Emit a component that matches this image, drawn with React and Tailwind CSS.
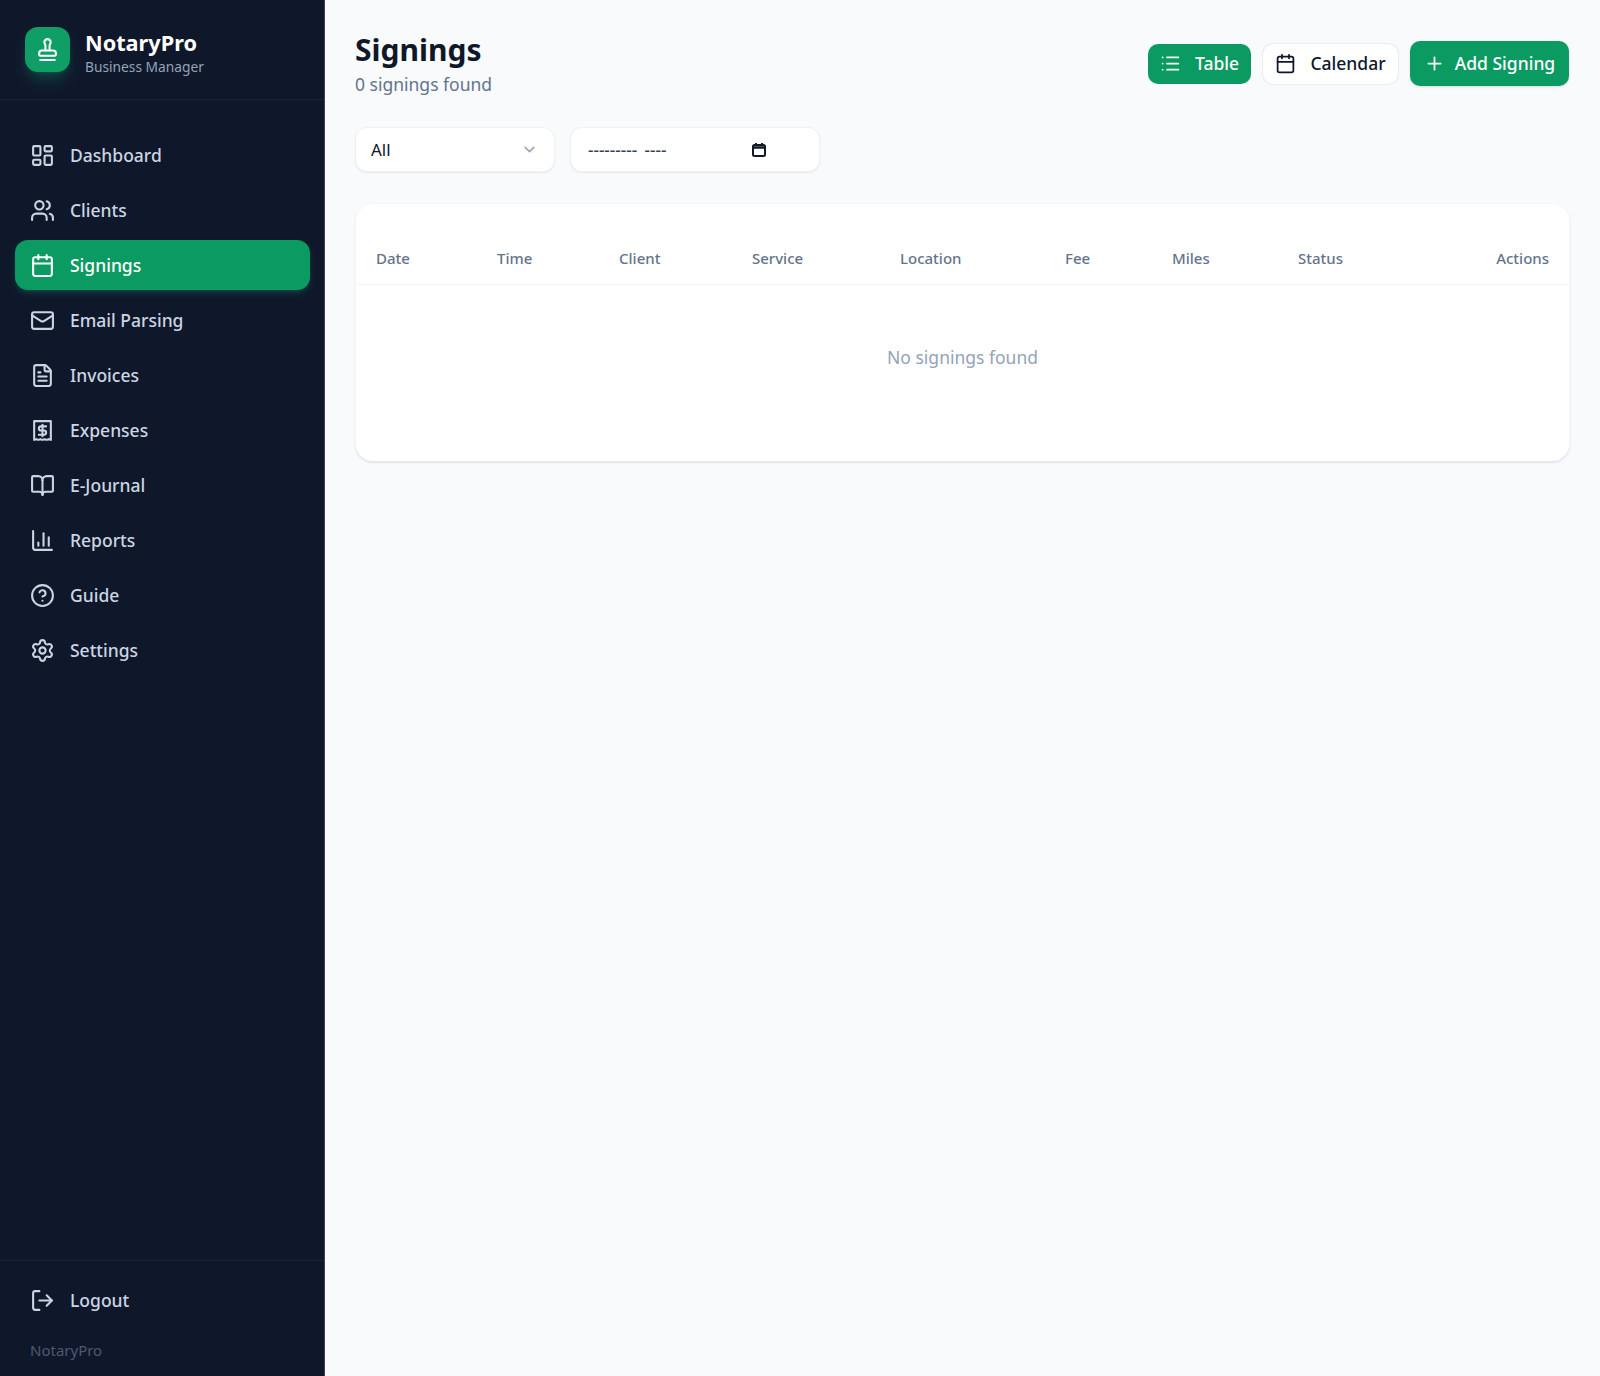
import { BookOpen, Calendar, ChartColumn, ChevronDown, CircleHelp, FileText, LayoutDashboard, List, LogOut, Mail, Plus, Settings, Stamp, Users } from 'lucide-react'

function ExpenseIcon({ className }) {
  return (
    <svg className={className} viewBox="0 0 24 24" fill="none" stroke="currentColor" strokeWidth="2" strokeLinecap="round" strokeLinejoin="round">
      <path d="M4 3h16v18l-2-.7-2 .7-2-.7-2 .7-2-.7-2 .7-2-.7-2 .7z" />
      <path d="M15.5 8h-5a2 2 0 0 0 0 4h3a2 2 0 0 1 0 4H8.5" />
      <path d="M12 6.5v11" />
    </svg>
  )
}

const navItems = [
  { label: 'Dashboard', icon: LayoutDashboard },
  { label: 'Clients', icon: Users },
  { label: 'Signings', icon: Calendar, active: true },
  { label: 'Email Parsing', icon: Mail },
  { label: 'Invoices', icon: FileText },
  { label: 'Expenses', icon: ExpenseIcon },
  { label: 'E-Journal', icon: BookOpen },
  { label: 'Reports', icon: ChartColumn },
  { label: 'Guide', icon: CircleHelp },
  { label: 'Settings', icon: Settings },
]

function NavItem({ item }) {
  const Icon = item.icon
  return (
    <div className={item.active
      ? 'flex h-[50px] items-center gap-[15px] rounded-[13px] bg-[#0b9a62] px-[15px] text-[17.5px] font-medium text-white shadow-md shadow-emerald-500/20'
      : 'flex h-[50px] items-center gap-[15px] rounded-[13px] px-[15px] text-[17.5px] font-medium text-[#cbd5e1]'}>
      <Icon className="h-[25px] w-[25px] shrink-0" strokeWidth={2} />
      <span>{item.label}</span>
    </div>
  )
}

function Sidebar() {
  return (
    <aside className="flex min-h-screen w-[325px] shrink-0 flex-col border-r border-[#3a4150] bg-[#0f172a]">
      <div className="flex h-[100px] items-center gap-[15px] border-b border-[#1b2436] px-[25px]">
        <div className="flex h-[45px] w-[45px] items-center justify-center rounded-[13px] bg-[#0f9f66] text-white shadow-lg shadow-emerald-500/25">
          <Stamp className="h-[25px] w-[25px]" strokeWidth={2} />
        </div>
        <div className="pt-[5px]">
          <div className="text-[21.7px] leading-[29px] font-bold text-white">NotaryPro</div>
          <div className="mt-[1px] text-[13.75px] leading-[18px] text-[#94a3b8]">Business Manager</div>
        </div>
      </div>
      <nav className="flex flex-1 flex-col gap-[5px] pt-[30px] pr-[14px] pb-[30px] pl-[15px]">
        {navItems.map((item) => <NavItem key={item.label} item={item} />)}
      </nav>
      <div className="border-t border-[#1b2436] px-[15px] pt-[14px] pb-[16px]">
        <NavItem item={{ label: 'Logout', icon: LogOut }} />
        <div className="mt-[15px] px-[15px] text-[15px] leading-[20px] text-[#4b5a70]">NotaryPro</div>
      </div>
    </aside>
  )
}

const columns = [
  { label: 'Date', width: 'w-[141px]', first: true },
  { label: 'Time', width: 'w-[122px]' },
  { label: 'Client', width: 'w-[133px]' },
  { label: 'Service', width: 'w-[148px]' },
  { label: 'Location', width: 'w-[165px]' },
  { label: 'Fee', width: 'w-[107px]' },
  { label: 'Miles', width: 'w-[126px]' },
  { label: 'Status', width: 'w-[130px]' },
  { label: 'Actions', width: '', right: true },
]

function SigningsTable() {
  return (
    <div className="overflow-hidden rounded-[18px] border-x border-t border-[#f4f6f9] bg-white pt-[28px] pb-[31px] shadow-[0_2px_2px_rgba(15,23,42,0.09)]">
      <table className="w-full table-fixed border-collapse">
        <thead>
          <tr className="border-b border-[#f5f7fa]">
            {columns.map((col) => (
              <th key={col.label} className={`${col.width} h-[52px] pr-[20px] text-[15px] font-medium text-[#64748b] ${col.right ? 'text-right' : 'text-left'} ${col.first ? 'pl-[20px]' : ''}`}>
                {col.label}
              </th>
            ))}
          </tr>
        </thead>
        <tbody>
          <tr>
            <td colSpan={9} className="h-[146px] text-center text-[17.5px] text-[#94a3b8]">No signings found</td>
          </tr>
        </tbody>
      </table>
    </div>
  )
}

export default function App() {
  return (
    <div className="flex min-h-screen bg-[#f8fafc] font-['Noto_Sans',sans-serif]">
      <Sidebar />
      <main className="flex-1 pt-[30px] pr-[30px] pl-[30px]">
        <div className="flex items-start justify-between">
          <div>
            <h1 className="text-[30px] leading-[40px] font-bold text-[#0f172a]">Signings</h1>
            <p className="mt-[2px] text-[17.5px] leading-[24px] text-[#64748b]">0 signings found</p>
          </div>
          <div className="mt-[11px] mr-[1px] flex items-center gap-[12px]">
            <button className="flex h-[40px] w-[103px] items-center justify-center gap-[14px] rounded-[10px] bg-[#0b9a62] text-[17.5px] font-medium text-white">
              <List className="h-[21px] w-[21px]" strokeWidth={2} />
              Table
            </button>
            <button className="flex h-[40px] w-[135px] items-center justify-center gap-[14px] rounded-[10px] bg-white text-[17.5px] font-medium text-[#0f172a] shadow-[0_0_2px_rgba(15,23,42,0.2)]">
              <Calendar className="h-[21px] w-[21px]" strokeWidth={2} />
              Calendar
            </button>
            <button className="flex h-[45px] w-[159px] items-center justify-center gap-[10px] rounded-[10px] bg-[#0b9a62] text-[17.5px] font-medium text-white shadow-sm">
              <Plus className="h-[21px] w-[21px]" strokeWidth={2} />
              Add Signing
            </button>
          </div>
        </div>
        <div className="mt-[31px] flex gap-[15px]">
          <div className="flex h-[45px] w-[200px] items-center justify-between rounded-[12px] border border-[#eef1f5] bg-white pr-[16px] pl-[15px] text-[17px] text-[#0f172a] shadow-[0_1px_2px_rgba(15,23,42,0.07)]">
            All
            <ChevronDown className="h-[17px] w-[17px] text-[#94a3b8]" strokeWidth={2} />
          </div>
          <div className="flex h-[45px] w-[250px] items-center rounded-[12px] border border-[#eef1f5] bg-white pl-[17px] text-[17px] font-medium text-[#334155] shadow-[0_1px_2px_rgba(15,23,42,0.07)]">
            <span className="w-[163px] [word-spacing:3px]">--------- ----</span>
            <svg className="h-[16px] w-[16px] text-[#111827]" viewBox="0 0 16 16" fill="none" stroke="currentColor" strokeWidth="2">
              <rect x="2" y="3" width="12" height="11" rx="1.5" />
              <path d="M2 5.5h12" strokeWidth="2.5" />
              <path d="M5 1v2M11 1v2" />
            </svg>
          </div>
        </div>
        <div className="mt-[31px]">
          <SigningsTable />
        </div>
      </main>
    </div>
  )
}
